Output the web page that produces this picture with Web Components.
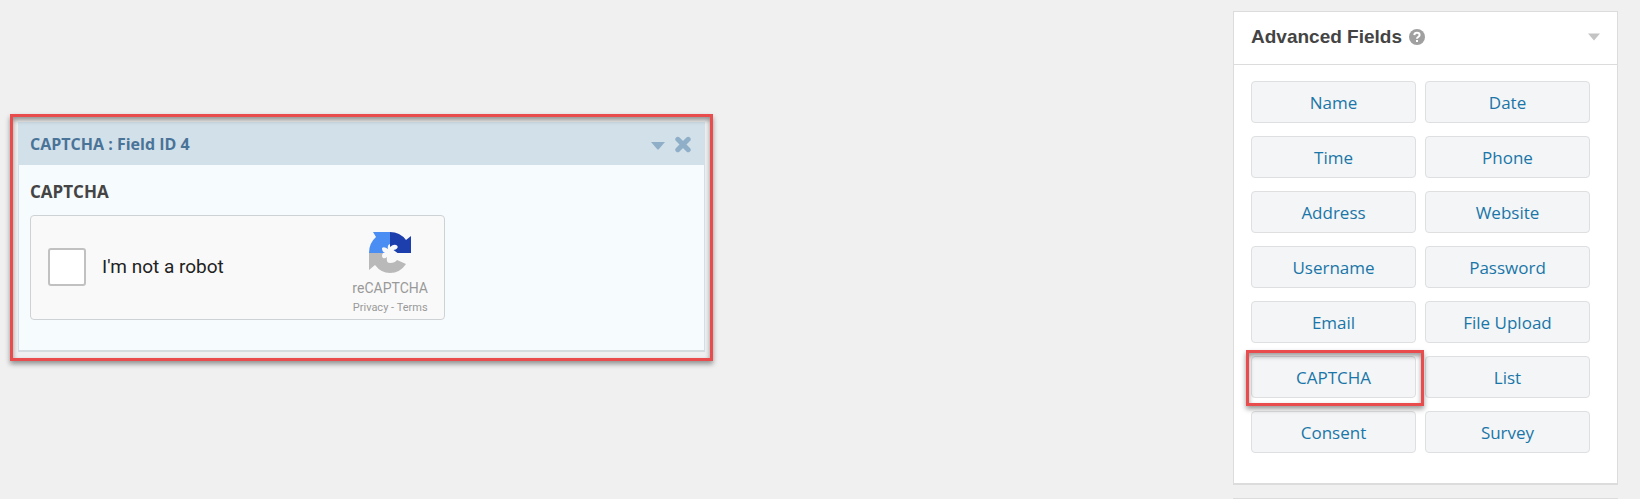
<!DOCTYPE html>
<html lang="en">
<head>
<meta charset="utf-8">
<title>Form Editor</title>
<style>
body {
  margin: 0;
  min-height: 100vh;
  background: #f0f0f0;
  color: #444;
  font-family: "Segoe UI", "Open Sans", "Noto Sans", sans-serif;
}
</style>
</head>
<body>
<form-editor>
  <highlight-frame slot="canvas">
    <form-field type="CAPTCHA" field-id="4" label="CAPTCHA">
      <captcha-box></captcha-box>
    </form-field>
  </highlight-frame>
  <field-panel slot="sidebar" heading="Advanced Fields">
    <field-button>Name</field-button>
    <field-button>Date</field-button>
    <field-button>Time</field-button>
    <field-button>Phone</field-button>
    <field-button>Address</field-button>
    <field-button>Website</field-button>
    <field-button>Username</field-button>
    <field-button>Password</field-button>
    <field-button>Email</field-button>
    <field-button>File Upload</field-button>
    <field-button highlighted>CAPTCHA</field-button>
    <field-button>List</field-button>
    <field-button>Consent</field-button>
    <field-button>Survey</field-button>
  </field-panel>
</form-editor>

<script>
// attaches an open shadow root filled with the given markup
function attach(element, html) {
  const template = document.createElement("template");
  template.innerHTML = html;
  const root = element.attachShadow({ mode: "open" });
  root.appendChild(template.content.cloneNode(true));
  return root;
}

class FormEditor extends HTMLElement {
  constructor() {
    super();
    attach(this, `
<style>
:host {
  display: grid;
  grid-template-columns: 23fr 17fr 385px;
  align-items: start;
  height: 100vh;
  overflow: hidden;
  box-sizing: border-box;
  padding: 11px 22px 0 10px;
}
main {
  padding-top: 103px;
}
aside {
  grid-column: 3;
  display: grid;
  gap: 13px;
}
.next-panel {
  height: 54px;
  border: 1px solid #dcdcdc;
  background: #fff;
}
</style>
<main><slot name="canvas"></slot></main>
<aside>
  <slot name="sidebar"></slot>
  <div class="next-panel"></div>
</aside>
`);
  }
}

class HighlightFrame extends HTMLElement {
  constructor() {
    super();
    attach(this, `
<style>
:host {
  display: block;
  position: relative;
  padding: 8px 8px 9px;
}
/* the frame lies over the content, with its shadow on both sides */
.frame {
  position: absolute;
  inset: 0;
  border: 3px solid #e84c4c;
  box-shadow: 0 3px 5px rgba(0, 0, 0, .4), inset 0 3px 5px rgba(0, 0, 0, .4);
  pointer-events: none;
}
</style>
<slot></slot>
<div class="frame"></div>
`);
  }
}

class FormField extends HTMLElement {
  constructor() {
    super();
    this.root = attach(this, `
<style>
:host {
  display: block;
  background: #f6fbfe;
  border: 1px solid #d2e0eb;
  border-top: 0;
  border-bottom: 2px solid #d5dcdf;
}
header {
  display: flex;
  align-items: center;
  gap: 8px;
  height: 43px;
  padding: 0 12px 0 11px;
  background: #d2e0ea;
}
.title {
  flex: 1;
  color: #4a7398;
  font-size: 16px;
  font-weight: 700;
}
button {
  display: flex;
  padding: 0;
  border: 0;
  background: none;
  color: #8fafc8;
}
.body {
  padding: 15px 11px 30px;
}
.label {
  margin-bottom: 11px;
  font-size: 17px;
  font-weight: 700;
  line-height: 24px;
}
</style>
<header>
  <span class="title"></span>
  <button type="button" aria-label="Expand">
    <svg width="16" height="16" viewBox="0 0 16 16" fill="currentColor"><path d="M1 6h14L8.500 13.500h-1z"/></svg>
  </button>
  <button type="button" aria-label="Delete">
    <svg width="18" height="18" viewBox="0 0 18 18" stroke="currentColor" stroke-width="5" stroke-linecap="round"><path d="M3.800 4.300l10.400 10.400M14.200 4.300L3.800 14.700"/></svg>
  </button>
</header>
<div class="body">
  <div class="label"></div>
  <slot></slot>
</div>
`);
  }

  connectedCallback() {
    this.root.querySelector(".title").textContent =
      `${this.getAttribute("type")} : Field ID ${this.getAttribute("field-id")}`;
    this.root.querySelector(".label").textContent = this.getAttribute("label");
  }
}

class CaptchaBox extends HTMLElement {
  constructor() {
    super();
    attach(this, `
<style>
:host {
  display: flex;
  align-items: center;
  box-sizing: border-box;
  max-width: 415px;
  height: 105px;
  padding: 0 16px 0 17px;
  border: 1px solid #cfd2d4;
  border-radius: 4px;
  background: #f9f9f9;
  font-family: Roboto, sans-serif;
}
label {
  flex: 1;
  display: flex;
  align-items: center;
  gap: 16px;
  padding-bottom: 2px;
  color: #222;
  font-size: 19px;
}
input {
  appearance: none;
  width: 38px;
  height: 38px;
  margin: 0;
  border: 2px solid #c1c1c1;
  border-radius: 3px;
  background: #fff;
}
.brand {
  display: flex;
  flex-direction: column;
  align-items: center;
  padding-top: 14px;
  color: #999;
}
.name {
  font-size: 14px;
  line-height: 20px;
  margin-top: 4px;
}
.links {
  font-size: 11px;
  line-height: 20px;
}
a {
  color: inherit;
  text-decoration: none;
}
</style>
<label><input type="checkbox">I'm not a robot</label>
<div class="brand">
  <svg width="42" height="42" viewBox="0 0 42 42">
    <path fill="#4a8df3" d="M21 0v12q-3 1-2 5-4-3-6-1 0 4 3 5H0Q0 11 7 5L4 0z"/>
    <path fill="#1d3fae" d="M21 0q10 0 16 8l5-4v17H28.500l-4-3q5-1 4-4-3-3-7.500 1z"/>
    <path fill="#b9b9b9" d="M0 21h14q-2 3 0 5 2 1 4-1-1 6 3 6 5 0 7-3l9 4q-6 9-16 9-9 0-15-8l-6 5z"/>
  </svg>
  <span class="name">reCAPTCHA</span>
  <span class="links"><a href="#">Privacy</a> - <a href="#">Terms</a></span>
</div>
`);
  }
}

class FieldPanel extends HTMLElement {
  constructor() {
    super();
    this.root = attach(this, `
<style>
:host {
  display: block;
  border: 1px solid #dcdcdc;
  border-bottom-width: 2px;
  background: #fff;
}
header {
  display: flex;
  align-items: center;
  box-sizing: border-box;
  height: 53px;
  padding: 0 17px 3px;
  border-bottom: 1px solid #dcdcdc;
}
h2 {
  margin: 0;
  font: 700 19px/24px "Liberation Sans", Arial, sans-serif;
}
.help {
  margin-left: 7px;
}
button {
  display: flex;
  margin-left: auto;
  padding: 0;
  border: 0;
  background: none;
}
.fields {
  display: grid;
  grid-template-columns: 1fr 1fr;
  gap: 13px 9px;
  padding: 16px 27px 30px 17px;
}
</style>
<header>
  <h2></h2>
  <svg class="help" width="16" height="16" viewBox="0 0 16 16">
    <circle cx="8" cy="8" r="8" fill="#a0a0a0"/>
    <path d="M5.300 6.200Q5.500 3.800 8 3.800q2.600 0 2.600 2.100 0 1.200-1.300 1.900Q8 8.400 8 9.700" fill="none" stroke="#fff" stroke-width="2"/>
    <path d="M7 10.900h2v2H7z" fill="#fff"/>
  </svg>
  <button type="button" aria-label="Collapse">
    <svg width="12" height="8" viewBox="0 0 12 8"><path fill="#c4c4c4" d="M0 .5h12L6 7.500z"/></svg>
  </button>
</header>
<div class="fields"><slot></slot></div>
`);
  }

  connectedCallback() {
    this.root.querySelector("h2").textContent = this.getAttribute("heading");
  }
}

class FieldButton extends HTMLElement {
  constructor() {
    super();
    attach(this, `
<style>
:host {
  display: block;
  position: relative;
}
button {
  width: 100%;
  height: 42px;
  padding: 0;
  border: 1px solid #dddfe0;
  border-radius: 4px;
  background: #f3f5f6;
  color: #1a76a8;
  font: inherit;
  font-size: 17px;
}
.frame {
  display: none;
}
:host([highlighted]) .frame {
  display: block;
  position: absolute;
  inset: -6px -8px -8px -5px;
  border: 3px solid #e84c4c;
  box-shadow: 0 3px 5px rgba(0, 0, 0, .4), inset 0 3px 5px rgba(0, 0, 0, .4);
  pointer-events: none;
  z-index: 1;
}
</style>
<button type="button"><slot></slot></button>
<div class="frame"></div>
`);
  }
}

customElements.define("form-editor", FormEditor);
customElements.define("highlight-frame", HighlightFrame);
customElements.define("form-field", FormField);
customElements.define("captcha-box", CaptchaBox);
customElements.define("field-panel", FieldPanel);
customElements.define("field-button", FieldButton);
</script>
</body>
</html>
